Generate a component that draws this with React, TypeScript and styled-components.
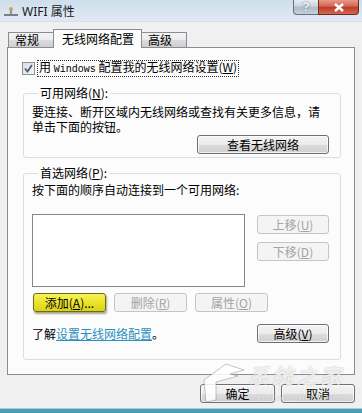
import styled, { createGlobalStyle } from "styled-components";

const GlobalStyle = createGlobalStyle`
  html, body {
    margin: 0;
    padding: 0;
    background: #f0f0f0;
  }
  body {
    font-family: "Noto Sans CJK SC", "Noto Sans", sans-serif;
    font-size: 12px;
    color: #000;
  }
  * {
    box-sizing: border-box;
  }
`;

type ButtonKind = "normal" | "disabled" | "hot";

export default function App() {
  return (
    <>
      <GlobalStyle />
      <Window>
        <TitleBar>
          <TitleIcon width="16" height="12" viewBox="0 0 16 12">
            <rect x="1" y="8" width="14" height="2" fill="#7a7f86" />
            <rect x="7" y="3" width="2" height="6" fill="#8a8f96" />
            <circle cx="8" cy="3" r="2" fill="#c9a25a" />
          </TitleIcon>
          <TitleText>WIFI 属性</TitleText>
          <Spacer />
          <HelpButton>?</HelpButton>
          <CloseButton>
            <svg width="12" height="9" viewBox="0 0 12 9">
              <path d="M2 1 L10 8 M10 1 L2 8" stroke="#fff" strokeWidth="2.4" />
            </svg>
          </CloseButton>
        </TitleBar>

        <TabStrip>
          <Tab $w={46}>常规</Tab>
          <Tab $w={89} $active>
            无线网络配置
          </Tab>
          <Tab $w={46}>高级</Tab>
        </TabStrip>

        <Panel>
          <CheckRow>
            <CheckBox>
              <svg width="11" height="11" viewBox="0 0 11 11">
                <path
                  d="M2 5.5 L4.5 8.5 L9 2"
                  fill="none"
                  stroke="#4a5f7a"
                  strokeWidth="1.8"
                />
              </svg>
            </CheckBox>
            <CheckLabel>
              用 <Mono>Windows</Mono> 配置我的无线网络设置(<u>W</u>)
            </CheckLabel>
          </CheckRow>

          <Group $top={12} $pad="5px 11px 3px 8px">
            <Legend>
              可用网络(<u>N</u>):
            </Legend>
            <Text>
              要连接、断开区域内无线网络或查找有关更多信息，请
              <br />
              单击下面的按钮。
            </Text>
            <ViewButton $w={132} $kind="normal">
              查看无线网络
            </ViewButton>
          </Group>

          <Group $top={9} $pad="3px 11px 16px 8px">
            <Legend>
              首选网络(<u>P</u>):
            </Legend>
            <Text>按下面的顺序自动连接到一个可用网络:</Text>
            <ListRow>
              <ListBox />
              <MoveColumn>
                <Button $w={72} $kind="disabled">
                  上移(<u>U</u>)
                </Button>
                <Button $w={72} $kind="disabled">
                  下移(<u>D</u>)
                </Button>
              </MoveColumn>
            </ListRow>
            <ActionRow>
              <Button $w={73} $kind="hot">
                添加(<u>A</u>)...
              </Button>
              <Button $w={73} $kind="disabled">
                删除(<u>R</u>)
              </Button>
              <Button $w={73} $kind="disabled">
                属性(<u>O</u>)
              </Button>
            </ActionRow>
            <FooterRow>
              <span>
                了解<Link>设置无线网络配置</Link>。
              </span>
              <Button $w={72} $kind="normal">
                高级(<u>V</u>)
              </Button>
            </FooterRow>
          </Group>
        </Panel>

        <ButtonBar>
          <Button $w={75} $kind="normal">
            确定
          </Button>
          <Button $w={74} $kind="normal">
            取消
          </Button>
        </ButtonBar>

        <BottomStrip />

        <Watermark>
          <svg width="46" height="44" viewBox="0 0 46 44">
            <path
              d="M4 20 L26 4 L44 10 L30 14 L38 16 L16 22 L16 40 L6 42 Z"
              fill="rgba(255,255,255,0.85)"
              stroke="rgba(140,140,140,0.5)"
              strokeWidth="1"
            />
          </svg>
          <WatermarkText>
            <WatermarkLogo>系统之家</WatermarkLogo>
            <WatermarkSite>XITONGZHIJIA.NET</WatermarkSite>
          </WatermarkText>
        </Watermark>
      </Window>
    </>
  );
}

const Window = styled.div`
  position: relative;
  display: flex;
  flex-direction: column;
  width: 362px;
  height: 413px;
  overflow: hidden;
  background: #f0f0f0;
`;

const TitleBar = styled.div`
  display: flex;
  align-items: flex-start;
  height: 22px;
  padding-right: 3px;
  background: linear-gradient(#cfdeec, #e0e9f3);
  border-bottom: 1px solid #d6dfe8;
`;

const TitleIcon = styled.svg`
  margin: 6px 0 0 3px;
`;

const TitleText = styled.span`
  margin: 4px 0 0 3px;
  font-family: "Noto Sans", "Noto Sans CJK SC", sans-serif;
  font-size: 12px;
  line-height: 16px;
  color: #1a1a1a;
`;

const Spacer = styled.div`
  flex: 1;
`;

const HelpButton = styled.div`
  width: 25px;
  height: 15px;
  border: 1px solid #66727f;
  border-top: none;
  border-right: none;
  border-radius: 0 0 0 4px;
  background: linear-gradient(#e6ecf2 0%, #c9d3dd 45%, #aebbc8 50%, #c5d1dc 100%);
  color: #f4f6f8;
  font-family: "Liberation Sans", sans-serif;
  font-weight: bold;
  font-size: 12px;
  line-height: 14px;
  text-align: center;
  text-shadow: 0 0 2px #56606b;
`;

const CloseButton = styled.div`
  display: flex;
  align-items: center;
  justify-content: center;
  width: 41px;
  height: 15px;
  border: 1px solid #6d2b23;
  border-top: none;
  border-radius: 0 0 4px 0;
  background: linear-gradient(#e79a8b 0%, #d26553 45%, #bd3a26 50%, #d2684f 100%);
`;

const TabStrip = styled.div`
  position: relative;
  z-index: 1;
  display: flex;
  align-items: flex-end;
  height: 18px;
  margin-top: 7px;
  padding-left: 9px;
`;

const Tab = styled.div<{ $w: number; $active?: boolean }>`
  width: ${(p) => p.$w}px;
  height: ${(p) => (p.$active ? 19 : 15)}px;
  margin-left: -1px;
  margin-bottom: ${(p) => (p.$active ? -1 : 0)}px;
  padding-left: ${(p) => (p.$active ? 8 : 6)}px;
  border: 1px solid #898c95;
  border-bottom: none;
  background: ${(p) =>
    p.$active ? "#fcfcfc" : "linear-gradient(#f3f3f3 0%, #ebebeb 50%, #dcdcdc 51%, #cfcfcf 100%)"};
  font-size: 12px;
  line-height: ${(p) => (p.$active ? 17 : 14)}px;
  white-space: nowrap;
`;

const Panel = styled.div`
  display: flex;
  flex-direction: column;
  margin: 0 7px;
  padding: 14px 13px 14px 15px;
  border: 1px solid #898c95;
  background: #fcfcfc;
`;

const CheckRow = styled.div`
  display: flex;
  align-items: center;
  gap: 2px;
  height: 13px;
  margin-left: -1px;
`;

const CheckBox = styled.span`
  display: flex;
  align-items: center;
  justify-content: center;
  width: 13px;
  height: 13px;
  border: 1px solid #8e8f8f;
  background: linear-gradient(135deg, #dcdcdc, #f6f6f6);
`;

const CheckLabel = styled.span`
  padding: 0 1px;
  border: 1px dotted #333;
  line-height: 12px;
  white-space: nowrap;
`;

const Mono = styled.span`
  font-family: "Liberation Mono", monospace;
  font-size: 10px;
`;

const Group = styled.fieldset<{ $top: number; $pad: string }>`
  display: flex;
  flex-direction: column;
  min-width: 0;
  margin: ${(p) => p.$top}px 0 0;
  padding: ${(p) => p.$pad};
  border: 1px solid #d5dfe5;
  border-radius: 3px;
`;

const Legend = styled.legend`
  margin-left: 6px;
  padding: 0 2px;
  height: 12px;
  line-height: 12px;
  font-size: 12px;
`;

const Text = styled.p`
  margin: 0;
  line-height: 15px;
  white-space: nowrap;
`;

const Button = styled.button<{ $w: number; $kind: ButtonKind }>`
  width: ${(p) => p.$w}px;
  height: 19px;
  padding: 0;
  border-radius: 3px;
  font-family: "Noto Sans CJK SC", "Noto Sans", sans-serif;
  font-size: 12px;
  line-height: 16px;
  text-align: center;
  white-space: nowrap;
  border: 1px solid
    ${(p) =>
      p.$kind === "disabled" ? "#c2c6ca" : p.$kind === "hot" ? "#6b6a1e" : "#707070"};
  color: ${(p) => (p.$kind === "disabled" ? "#a3a3a3" : "#000")};
  background: ${(p) =>
    p.$kind === "disabled"
      ? "#f4f4f4"
      : p.$kind === "hot"
      ? "linear-gradient(#f6f25a 0%, #ece42c 50%, #d9d01a 100%)"
      : "linear-gradient(#f4f4f4 0%, #ebebeb 50%, #dddddd 51%, #cfcfcf 100%)"};
  box-shadow: ${(p) =>
    p.$kind === "hot"
      ? "1px 2px 2px rgba(60, 60, 0, 0.45)"
      : p.$kind === "normal"
      ? "inset 0 0 0 1px rgba(255, 255, 255, 0.7)"
      : "none"};
`;

const ViewButton = styled(Button)`
  align-self: flex-end;
  margin-top: 1px;
`;

const ListRow = styled.div`
  display: flex;
  gap: 12px;
  margin-top: 17px;
`;

const ListBox = styled.div`
  width: 213px;
  height: 73px;
  border: 1px solid #828790;
  background: #fff;
`;

const MoveColumn = styled.div`
  display: flex;
  flex-direction: column;
  gap: 8px;
  padding-top: 1px;
`;

const ActionRow = styled.div`
  display: flex;
  gap: 8px;
  margin-top: 6px;
  padding-left: 1px;
`;

const FooterRow = styled.div`
  display: flex;
  align-items: center;
  justify-content: space-between;
  margin-top: 12px;
  line-height: 15px;
`;

const Link = styled.span`
  color: #2b8fc0;
  text-decoration: underline;
`;

const ButtonBar = styled.div`
  display: flex;
  justify-content: flex-end;
  gap: 6px;
  margin-top: 9px;
  padding: 0 7px;
`;

const BottomStrip = styled.div`
  height: 5px;
  margin-top: auto;
  border-top: 1px solid #9ccfd8;
  background: #4b9db0;
`;

const Watermark = styled.div`
  position: absolute;
  left: 200px;
  top: 360px;
  display: flex;
  align-items: flex-start;
  gap: 2px;
  pointer-events: none;
`;

const WatermarkText = styled.div`
  display: flex;
  flex-direction: column;
  padding-top: 4px;
`;

const WatermarkLogo = styled.span`
  font-size: 21px;
  font-style: italic;
  font-weight: bold;
  letter-spacing: 3px;
  line-height: 22px;
  color: rgba(255, 255, 255, 0.82);
  text-shadow: 0 0 1px rgba(120, 120, 120, 0.6);
`;

const WatermarkSite = styled.span`
  margin: 8px 0 0 8px;
  font-family: "Liberation Sans", sans-serif;
  font-size: 8px;
  letter-spacing: 1px;
  color: rgba(255, 255, 255, 0.7);
  text-shadow: 0 0 1px rgba(120, 120, 120, 0.5);
`;
